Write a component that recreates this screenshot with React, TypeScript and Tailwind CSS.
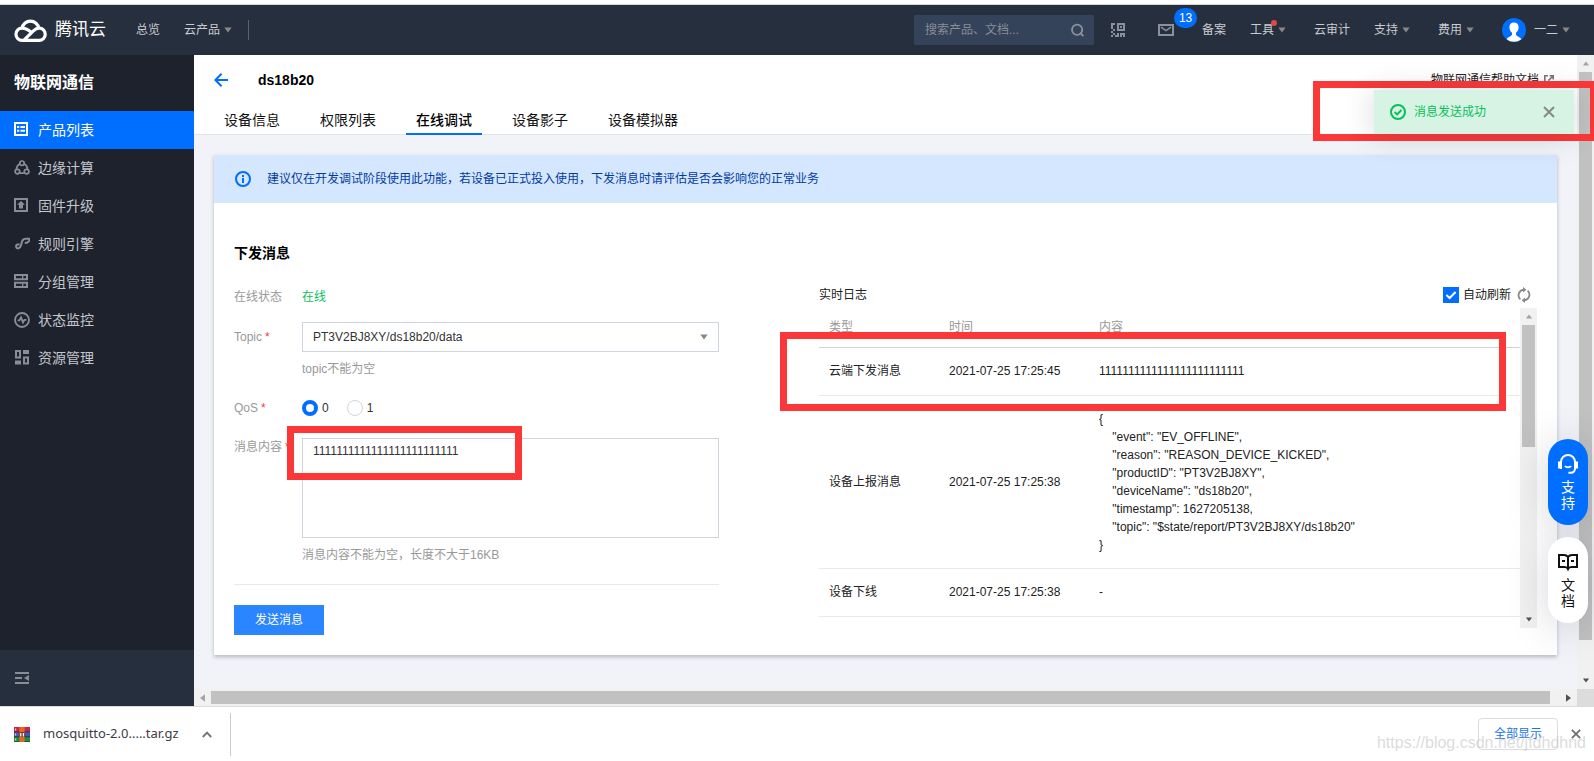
import type { ReactNode } from "react";

type IconProps = { className?: string };

const Caret = ({ className = "" }: IconProps) => (
  <svg className={className} width="8" height="6" viewBox="0 0 8 6" fill="currentColor" aria-hidden="true">
    <path d="M0.3 0.5H7.7L4 5.5Z" />
  </svg>
);

const CloudLogo = () => (
  <svg width="33" height="24" viewBox="0 0 33 24" fill="none" stroke="#fff" strokeWidth="3.2" aria-hidden="true">
    <path d="M17.6 14.6C14.2 11.6 11.8 10.2 8 10.2A6 6 0 0 0 8 22.3H25.2A6 6 0 0 0 25.2 10.2C22.8 10.2 21.2 11.2 19.4 12.9L10.2 21.8" />
    <path d="M7.9 10.4A8.6 8.6 0 0 1 24.9 10.4" />
  </svg>
);

const SearchIcon = () => (
  <svg width="15" height="15" viewBox="0 0 15 15" fill="none" stroke="#8a919c" strokeWidth="2" aria-hidden="true">
    <circle cx="6.7" cy="6.7" r="5.6" />
    <path d="M10 10L13.6 13.6" />
  </svg>
);

const QrIcon = () => (
  <svg width="14" height="14" viewBox="0 0 14 14" fill="#8a919c" shapeRendering="crispEdges" aria-hidden="true">
    <path d="M6 0H14V8H6ZM8 2V6H12V2Z" fillRule="evenodd" />
    <path d="M9 3H11V5H9ZM0 0H4V2H2V6H0ZM2 6H4V8H2ZM0 8H2V10H0ZM2 10H4V12H2ZM0 12H2V14H0ZM5 12H8V14H4V12ZM6 10H8V12H6ZM9 10H14V14H12V12H11V14H9Z" />
  </svg>
);

const MailIcon = () => (
  <svg width="16" height="12" viewBox="0 0 16 12" fill="none" stroke="#8a919c" strokeWidth="2" aria-hidden="true">
    <path d="M1 1H15V11H1Z" />
    <path d="M3 3.2L8 6.6L13 3.2" strokeWidth="1.6" />
  </svg>
);

const Avatar = () => (
  <svg width="24" height="24" viewBox="0 0 24 24" aria-hidden="true">
    <circle cx="12" cy="12" r="12" fill="#006eff" />
    <path
      d="M12 4.6C8.8 4.6 7.2 6.8 7.4 9.6C7.5 12 8.6 13.8 10 14.8V16.6C10 18.2 6.4 18.6 4.6 21.2A11.9 11.9 0 0 0 19.4 21.2C17.6 18.6 14 18.2 14 16.6V14.8C15.4 13.8 16.5 12 16.6 9.6C16.8 6.8 15.2 4.6 12 4.6Z"
      fill="#fff"
    />
  </svg>
);

const CloseIcon = ({ size, color }: { size: number; color: string }) => (
  <svg width={size} height={size} viewBox="0 0 12 12" fill="none" stroke={color} strokeWidth="2" aria-hidden="true">
    <path d="M1 1L11 11M11 1L1 11" />
  </svg>
);

const menu: { label: string; active?: boolean; icon: ReactNode }[] = [
  {
    label: "产品列表",
    active: true,
    icon: (
      <g>
        <path d="M1 1H13V13H1Z" />
        <path d="M3 5H5.2M6.4 5H11M3 8.8H5.2M6.4 8.8H11" />
      </g>
    ),
  },
  {
    label: "边缘计算",
    icon: (
      <g strokeWidth="1.7">
        <circle cx="8" cy="3.2" r="2.2" />
        <circle cx="3.4" cy="11.6" r="2.3" />
        <circle cx="12.6" cy="11.6" r="2.3" />
        <path d="M5.8 3.8C3.8 5 2.6 7 2.4 9.2M10.2 3.8C12.2 5 13.4 7 13.6 9.2M5.8 13.2H10.2" />
      </g>
    ),
  },
  {
    label: "固件升级",
    icon: (
      <g>
        <path d="M1 1H13V13H1Z" />
        <path d="M7 3L11 6.8H9V10.4H5V6.8H3Z" fill="currentColor" stroke="none" />
      </g>
    ),
  },
  {
    label: "规则引擎",
    icon: (
      <path d="M5.6 8.2L3 8.6A2.2 2.2 0 0 0 3.4 12.4C6.2 12.2 7 10.2 7.4 7.8C7.8 5 8.6 3 11.4 2.8H15.4V4.6L13.4 6.6L10.8 7" />
    ),
  },
  {
    label: "分组管理",
    icon: (
      <g>
        <path d="M1 1H13V5.2H1ZM1 8.8H13V13H1Z" />
        <path d="M8.6 1V5.2M8.6 8.8V13" strokeWidth="1.4" />
      </g>
    ),
  },
  {
    label: "状态监控",
    icon: (
      <g strokeWidth="1.8">
        <circle cx="8" cy="8" r="7" />
        <path d="M3.6 8.4H5.4L7 5.4L9 10.4L10.4 7.8H12.4" />
      </g>
    ),
  },
  {
    label: "资源管理",
    icon: (
      <g>
        <path d="M2 1H6V7.4H2ZM10 7.4H14V13.6H10Z" />
        <path d="M9 0H15V4H9ZM1 10.6H7V14.4H1Z" fill="currentColor" stroke="none" />
      </g>
    ),
  },
];

const tabs = ["设备信息", "权限列表", "在线调试", "设备影子", "设备模拟器"];

const message = "1111111111111111111111111";

const report = `{
    "event": "EV_OFFLINE",
    "reason": "REASON_DEVICE_KICKED",
    "productID": "PT3V2BJ8XY",
    "deviceName": "ds18b20",
    "timestamp": 1627205138,
    "topic": "$state/report/PT3V2BJ8XY/ds18b20"
}`;

const logs = [
  { type: "云端下发消息", time: "2021-07-25 17:25:45", content: message },
  { type: "设备上报消息", time: "2021-07-25 17:25:38", content: report },
  { type: "设备下线", time: "2021-07-25 17:25:38", content: "-" },
];

const Header = () => (
  <header className="flex h-[50px] shrink-0 items-center bg-[#262f3e] pr-6 pl-[14px] text-xs text-[#c8cbd0]">
    <a href="#" className="flex items-center gap-2">
      <CloudLogo />
      <span className="text-[17px] text-white">腾讯云</span>
    </a>
    <nav className="ml-[30px] flex items-center gap-6">
      <a href="#">总览</a>
      <a href="#" className="flex items-center gap-1">
        云产品
        <Caret className="text-[#888]" />
      </a>
    </nav>
    <div className="ml-4 h-5 w-px bg-[#5a626e]" />
    <div className="relative ml-auto flex h-[30px] w-[180px] items-center bg-[#34425a] pr-[9px] pl-[11px]">
      <input
        aria-label="搜索"
        placeholder="搜索产品、文档..."
        className="w-full min-w-0 bg-transparent outline-none placeholder:text-[#888d94]"
      />
      <SearchIcon />
    </div>
    <button type="button" aria-label="小程序" className="ml-[17px]">
      <QrIcon />
    </button>
    <button type="button" className="relative ml-[33px]" aria-label="消息">
      <MailIcon />
      <span className="absolute -top-4 left-4 flex h-5 items-center rounded-full bg-[#006eff] px-[5px] text-xs text-white">
        13
      </span>
    </button>
    <a href="#" className="ml-7">
      备案
    </a>
    <a href="#" className="relative ml-6 flex items-center gap-1">
      工具
      <Caret className="text-[#888]" />
      <span className="absolute -top-[2px] left-[21px] size-[6px] rounded-full bg-[#e54545]" />
    </a>
    <a href="#" className="ml-7">
      云审计
    </a>
    <a href="#" className="ml-6 flex items-center gap-1">
      支持
      <Caret className="text-[#888]" />
    </a>
    <a href="#" className="ml-7 flex items-center gap-1">
      费用
      <Caret className="text-[#888]" />
    </a>
    <a href="#" className="ml-7 flex items-center gap-1">
      <Avatar />
      <span className="ml-1">一二</span>
      <Caret className="text-[#888]" />
    </a>
  </header>
);

const Sidebar = () => (
  <aside className="flex w-[194px] shrink-0 flex-col bg-[#1e222d]">
    <h2 className="px-[14px] py-4 text-base leading-6 font-bold text-white">物联网通信</h2>
    <ul>
      {menu.map((item) => (
        <li key={item.label}>
          <a
            href="#"
            className={`flex h-[38px] items-center gap-2 px-[14px] text-sm ${
              item.active ? "bg-[#006eff] text-white" : "text-[#c3c6cb]"
            }`}
          >
            <svg
              className={item.active ? "text-white" : "text-[#878e97]"}
              width="16"
              height="16"
              viewBox="0 0 16 16"
              fill="none"
              stroke="currentColor"
              strokeWidth="2"
              aria-hidden="true"
            >
              {item.icon}
            </svg>
            {item.label}
          </a>
        </li>
      ))}
    </ul>
    <div className="mt-auto flex h-14 items-center bg-[#262f3e] px-[15px]">
      <button type="button" aria-label="收起">
        <svg width="14" height="12" viewBox="0 0 14 12" fill="#878e97" aria-hidden="true">
          <path d="M0 0H14V2H0ZM0 5H7V7H0ZM0 10H14V12H0ZM14 3V9L9 6Z" />
        </svg>
      </button>
    </div>
  </aside>
);

const PageHead = () => (
  <div className="border-b border-[#e1e4eb] bg-white px-5">
    <div className="flex h-[50px] items-center">
      <button type="button" aria-label="返回">
        <svg width="14" height="14" viewBox="0 0 14 14" fill="none" stroke="#006eff" strokeWidth="2" aria-hidden="true">
          <path d="M14 7H1.6M7.6 0.8L1.4 7L7.6 13.2" />
        </svg>
      </button>
      <h1 className="ml-[30px] text-sm font-bold text-black">ds18b20</h1>
      <a href="#" className="ml-auto flex items-center gap-[5px] text-xs text-[#222]">
        物联网通信帮助文档
        <svg
          className="mr-[3px]"
          width="10"
          height="10"
          viewBox="0 0 10 10"
          fill="none"
          stroke="#777"
          strokeWidth="1.6"
          aria-hidden="true"
        >
          <path d="M4 0.8H0.8V9.2H9.2V6M5.6 0.8H9.2V4.4M9 1L4.4 5.6" />
        </svg>
      </a>
    </div>
    <div role="tablist" className="-mb-px flex h-[30px] gap-5 text-sm text-[#111]">
      {tabs.map((tab) => (
        <button
          key={tab}
          type="button"
          role="tab"
          aria-selected={tab === "在线调试"}
          className="flex flex-col justify-end border-b-2 border-transparent px-[10px] pb-[3px] aria-selected:border-[#006eff] aria-selected:font-medium aria-selected:text-black"
        >
          {tab}
        </button>
      ))}
    </div>
  </div>
);

const Star = () => <span className="ml-[3px] text-[#e54545]">*</span>;

const SendForm = () => (
  <form className="text-[#333]">
    <div className="mb-[15px] flex leading-5">
      <span className="w-[68px] shrink-0 text-[#999]">在线状态</span>
      <span className="text-[#0abf5b]">在线</span>
    </div>
    <div className="flex">
      <label htmlFor="topic" className="w-[68px] shrink-0 leading-[30px] text-[#999]">
        Topic
        <Star />
      </label>
      <div className="flex-1">
        <div className="relative flex items-center">
          <select
            id="topic"
            className="h-[30px] w-full appearance-none rounded-none border border-[#cfd5de] bg-white px-[10px] text-[#333] outline-none"
          >
            <option>PT3V2BJ8XY/ds18b20/data</option>
          </select>
          <Caret className="pointer-events-none absolute right-[11px] text-[#888]" />
        </div>
        <p className="mt-2 leading-[18px] text-[#999]">topic不能为空</p>
      </div>
    </div>
    <div role="radiogroup" aria-label="QoS" className="my-[22px] flex h-4 items-center">
      <span className="w-[68px] shrink-0 text-[#999]">
        QoS
        <Star />
      </span>
      <label className="mr-[18px] flex items-center gap-1">
        <input
          type="radio"
          name="qos"
          defaultChecked
          className="size-4 appearance-none rounded-full border border-[#cfd5de] checked:border-4 checked:border-[#006eff]"
        />
        0
      </label>
      <label className="flex items-center gap-1">
        <input
          type="radio"
          name="qos"
          className="size-4 appearance-none rounded-full border border-[#cfd5de] checked:border-4 checked:border-[#006eff]"
        />
        1
      </label>
    </div>
    <div className="flex">
      <label htmlFor="payload" className="w-[68px] shrink-0 leading-[18px] whitespace-nowrap text-[#999]">
        消息内容
        <Star />
      </label>
      <div className="relative flex-1">
        <textarea
          id="payload"
          defaultValue={message}
          className="block h-[100px] w-full resize-none border border-[#cfd5de] bg-white px-[10px] py-[3px] leading-[18px] text-[#333] outline-none"
        />
        <div className="pointer-events-none absolute -top-3 -left-[15px] h-[54px] w-[235px] border-[7px] border-[#fb3737]" />
        <p className="mt-2 leading-[18px] text-[#999]">消息内容不能为空，长度不大于16KB</p>
      </div>
    </div>
    <div className="mt-5 border-t border-[#e5e8ed] pt-5">
      <button type="button" className="h-[30px] w-[90px] bg-[#2a85ff] text-white">
        发送消息
      </button>
    </div>
  </form>
);

const LogPanel = () => (
  <section className="text-[#222]">
    <div className="mb-[5px] flex h-4 items-center">
      <h4>实时日志</h4>
      <label className="ml-auto flex items-center gap-1">
        <span className="relative flex">
          <input type="checkbox" defaultChecked className="size-4 appearance-none bg-[#006eff]" />
          <svg
            className="pointer-events-none absolute inset-0"
            width="16"
            height="16"
            viewBox="0 0 16 16"
            fill="none"
            stroke="#fff"
            strokeWidth="2"
            aria-hidden="true"
          >
            <path d="M3.4 8L6.6 11L12.6 5" />
          </svg>
        </span>
        自动刷新
      </label>
      <button type="button" aria-label="刷新" className="mx-[6px]">
        <svg width="14" height="16" viewBox="0 0 14 16" fill="none" stroke="#888" strokeWidth="1.8" aria-hidden="true">
          <path d="M3.4 12.4A5.6 5.6 0 0 1 6.6 2.7M10.6 3.6A5.6 5.6 0 0 1 7.4 13.3" />
          <path d="M6 0L9.4 2.8L6 5.6ZM8 10.4L4.6 13.2L8 16Z" fill="#888" stroke="none" />
        </svg>
      </button>
    </div>
    <div className="relative flex h-[320px]">
      <div className="min-w-0 flex-1">
        <table className="w-full table-fixed text-left">
          <thead>
            <tr className="h-[39px] border-b border-[#cfd3e0] text-[#999]">
              <th className="w-[120px] pl-[10px] font-normal">类型</th>
              <th className="w-[150px] pl-[10px] font-normal">时间</th>
              <th className="pl-[10px] font-normal">内容</th>
            </tr>
          </thead>
          <tbody>
            {logs.map((log) => (
              <tr key={log.type} className="border-b border-[#e7eaef]">
                <td className="h-12 pl-[10px]">{log.type}</td>
                <td className="pl-[10px]">{log.time}</td>
                <td className="py-[14px] pl-[10px] leading-[18px] whitespace-pre">{log.content}</td>
              </tr>
            ))}
          </tbody>
        </table>
      </div>
      <div className="flex w-[17px] flex-col items-center bg-[#f1f1f1]">
        <Caret className="my-[6px] h-[5px] rotate-180 text-[#a3a3a3]" />
        <div className="h-[122px] w-[13px] bg-[#c1c1c1]" />
        <Caret className="mt-auto mb-[6px] h-[5px] text-[#505050]" />
      </div>
      <div className="pointer-events-none absolute top-6 right-[31px] -left-[39px] h-[79px] border-[7px] border-[#fb3737]" />
    </div>
  </section>
);

const Toast = () => (
  <div className="absolute top-[81px] -right-[3px] z-20 border-[7px] border-[#fb3737] pt-[2px] pr-4 pl-[54px]">
    <div
      role="status"
      className="flex h-11 w-[200px] items-center bg-[#d6f3e4] px-4 text-xs text-[#0abf5b] shadow-[0_2px_30px_rgba(54,58,80,0.2)]"
    >
      <svg width="16" height="16" viewBox="0 0 16 16" fill="none" stroke="#0abf5b" strokeWidth="2" aria-hidden="true">
        <circle cx="8" cy="8" r="7" />
        <path d="M4.6 8L7.2 10.4L11.4 6" />
      </svg>
      <span className="ml-2">消息发送成功</span>
      <button type="button" aria-label="关闭" className="mr-[3px] ml-auto">
        <CloseIcon size={12} color="#888" />
      </button>
    </div>
  </div>
);

const FloatButtons = () => (
  <div className="absolute top-[439px] right-[6px] z-20 flex flex-col gap-3 text-sm leading-4">
    <button
      type="button"
      className="flex h-[86px] w-10 flex-col items-center rounded-full bg-[#006eff] px-3 pt-[15px] text-white shadow-[0_4px_40px_rgba(54,58,80,0.22)]"
    >
      <svg width="20" height="20" viewBox="0 0 20 20" fill="none" stroke="#fff" strokeWidth="2" aria-hidden="true">
        <path d="M3 15V8A7 7 0 0 1 17 8V14.4A4 4 0 0 1 13 18.8H10.4" />
        <path d="M1.4 7.6V14.6M18.6 7.6V14.6" strokeWidth="2.8" />
        <path d="M7 12C8.4 13.8 11.6 13.8 13 12" />
      </svg>
      <span className="mt-[5px]">支持</span>
    </button>
    <button
      type="button"
      className="flex h-[86px] w-10 flex-col items-center rounded-full bg-white px-3 pt-[15px] text-[#111] shadow-[0_4px_40px_rgba(54,58,80,0.22)]"
    >
      <svg width="20" height="20" viewBox="0 0 20 20" fill="none" stroke="#111" strokeWidth="2" aria-hidden="true">
        <path d="M10 17.6V5C9 3.6 7.6 3 6 3H1V15H6.6C8.2 15 9.4 15.6 10 17C10.6 15.6 11.8 15 13.4 15H19V3H14C12.4 3 11 3.6 10 5" />
        <path d="M4 9H7M13 9H16" />
      </svg>
      <span className="mt-[5px]">文档</span>
    </button>
  </div>
);

const DownloadBar = () => (
  <footer className="relative flex h-[55px] shrink-0 items-center border-t border-[#d8dadd] bg-white pr-[13px] pl-[14px]">
    <svg width="16" height="15" viewBox="0 0 16 15" aria-hidden="true">
      <path d="M0 0H16V5H0Z" fill="#c2274f" />
      <path d="M0 5H16V10H0Z" fill="#4b50b8" />
      <path d="M0 10H16V15H0Z" fill="#149447" />
      <path d="M0 4.4H16V5.2H0ZM0 9.4H16V10.2H0ZM0 14.4H16V15H0Z" fill="#2a2233" />
      <path d="M5.4 0H10.6V15H5.4Z" fill="#e8661c" />
      <path d="M5.4 5H10.6V10H5.4Z" fill="#7b3c1c" />
      <path d="M6.2 9.4V6H7.4V9.4ZM8.8 9.4V6H10V9.4Z" fill="#fff" />
      <path d="M1 1.4H2.2V3.6H1ZM1 6.4H2.2V8.6H1ZM1 11.4H2.2V13.6H1Z" fill="#ffd84a" />
    </svg>
    <span className="ml-[13px] w-[140px] font-['Noto_Sans',sans-serif] text-[13px] whitespace-nowrap text-[#3c4043]">
      mosquitto-2.0.....tar.gz
    </span>
    <button type="button" aria-label="更多" className="ml-[19px]">
      <svg width="10" height="7" viewBox="0 0 10 7" fill="none" stroke="#777" strokeWidth="2" aria-hidden="true">
        <path d="M0.8 6L5 1.6L9.2 6" />
      </svg>
    </button>
    <div className="ml-[18px] h-[43px] w-px self-end bg-[#c9cbce] mb-[5px]" />
    <button type="button" className="ml-auto h-8 w-20 rounded border border-[#dadce0] text-xs text-[#1a73e8]">
      全部显示
    </button>
    <button type="button" aria-label="关闭" className="ml-[13px]">
      <CloseIcon size={10} color="#6b6b6b" />
    </button>
    <span className="pointer-events-none absolute right-2 bottom-2 text-base leading-5 text-[#c4c4c4]/60">
      https://blog.csdn.net/jfdhdhnd
    </span>
  </footer>
);

export default function App() {
  return (
    <div className="relative flex h-screen flex-col overflow-hidden bg-white font-['Liberation_Sans','Noto_Sans_CJK_SC',sans-serif] text-xs">
      <div className="h-[5px] shrink-0 border-b border-[#d4d6d9]" />
      <Header />
      <div className="flex min-h-0 flex-1">
        <Sidebar />
        <div className="flex min-w-0 flex-1 flex-col">
          <div className="flex min-h-0 flex-1">
            <main className="min-w-0 flex-1 overflow-hidden bg-[#f2f3f8]">
              <PageHead />
              <div className="m-5 bg-white shadow-[0_2px_4px_rgba(54,58,80,0.32)]">
                <div className="flex h-12 items-center gap-4 bg-[#d5e7ff] px-[21px] text-[#003b9f]">
                  <svg
                    width="16"
                    height="16"
                    viewBox="0 0 16 16"
                    fill="none"
                    stroke="#006eff"
                    strokeWidth="2"
                    aria-hidden="true"
                  >
                    <circle cx="8" cy="8" r="7" />
                    <path d="M8 7V12M8 4V6" />
                  </svg>
                  建议仅在开发调试阶段使用此功能，若设备已正式投入使用，下发消息时请评估是否会影响您的正常业务
                </div>
                <div className="px-5 pt-10 pb-5">
                  <h3 className="mb-6 text-sm leading-5 font-bold text-black">下发消息</h3>
                  <div className="grid grid-cols-[485px_1fr] gap-[100px]">
                    <SendForm />
                    <LogPanel />
                  </div>
                </div>
              </div>
            </main>
            <div className="flex w-[17px] shrink-0 flex-col items-center bg-[#f1f1f1]">
              <Caret className="my-[6px] h-[5px] rotate-180 text-[#a3a3a3]" />
              <div className="mb-8 w-[13px] flex-1 bg-[#c1c1c1]" />
              <Caret className="my-[6px] h-[5px] text-[#505050]" />
            </div>
          </div>
          <div className="flex h-[17px] shrink-0 items-center bg-[#f1f1f1]">
            <Caret className="mx-1 w-[9px] rotate-90 text-[#a3a3a3]" />
            <div className="h-[13px] flex-1 bg-[#c1c1c1]" />
            <Caret className="mr-1 ml-[14px] w-[9px] -rotate-90 text-[#505050]" />
            <div className="h-full w-[17px] bg-[#dcdcdc]" />
          </div>
        </div>
      </div>
      <DownloadBar />
      <Toast />
      <FloatButtons />
    </div>
  );
}
